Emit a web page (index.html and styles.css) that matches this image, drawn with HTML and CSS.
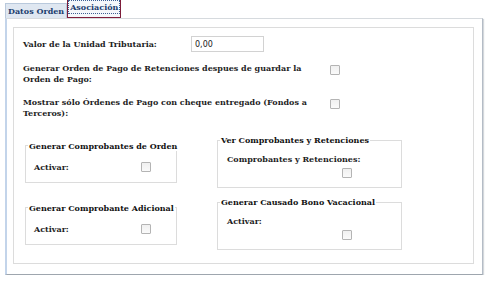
FILE: index.html
```
<!doctype html>
<html lang="es">
<head>
	<meta charset="utf-8">
	<title>Asociación</title>
	<link rel="stylesheet" href="styles.css">
</head>
<body>

	<!--pestañas-->
	<div class="tabs">
		<div class="tab">Datos Orden</div>
		<div class="tab tab_activa"><span>Asociación</span></div>
	</div>

	<div class="panel">
		<div class="caja">

			<div class="fila fila_valor">
				<label class="etq etq_valor">Valor de la Unidad Tributaria:</label>
				<input type="text" class="txt" value="0,00">
			</div>

			<div class="fila fila_check">
				<label class="etq etq_larga">Generar Orden de Pago de Retenciones despues de guardar la Orden de Pago:</label>
				<span class="chk"></span>
			</div>

			<div class="fila fila_check fila_sep">
				<label class="etq etq_larga">Mostrar sólo Órdenes de Pago con cheque entregado (Fondos a Terceros):</label>
				<span class="chk"></span>
			</div>

			<!--grupos-->
			<div class="grupos">
				<fieldset class="grupo grupo_izq">
					<legend>Generar Comprobantes de Orden</legend>
					<div class="fila_grupo">
						<label class="etq etq_activar">Activar:</label>
						<span class="chk"></span>
					</div>
				</fieldset>

				<fieldset class="grupo grupo_der">
					<legend>Ver Comprobantes y Retenciones</legend>
					<label class="etq etq_grupo">Comprobantes y Retenciones:</label>
					<span class="chk chk_abajo"></span>
				</fieldset>

				<fieldset class="grupo grupo_izq">
					<legend>Generar Comprobante Adicional</legend>
					<div class="fila_grupo">
						<label class="etq etq_activar">Activar:</label>
						<span class="chk"></span>
					</div>
				</fieldset>

				<fieldset class="grupo grupo_der">
					<legend>Generar Causado Bono Vacacional</legend>
					<label class="etq etq_grupo">Activar:</label>
					<span class="chk chk_abajo"></span>
				</fieldset>
			</div>

		</div>
	</div>

</body>
</html>
```

FILE: styles.css
```
body{
	margin: 0;
	background: #ffffff;
	font-family: "DejaVu Serif", serif;
	font-size: 8px;
	font-weight: bold;
	color: #1e1e1e;
}

.tabs{
	display: flex;
	align-items: flex-end;
	height: 18px;
	padding-left: 5px;
}

.tab{
	height: 14px;
	padding: 0 2px;
	line-height: 14px;
	background-color: #dfe7f1;
	border: 1px solid #b9c9dc;
	border-bottom: none;
	color: #1b3d6e;
}

.tab_activa{
	height: 16px;
	padding: 1px 1px 0 1px;
	line-height: 12px;
	background-color: #f4f7fb;
	border: 1px solid #7d1d3a;
}

.tab_activa span{
	display: inline-block;
	padding: 0 1px;
	outline: 1px dotted #3d5f93;
	outline-offset: 0;
}

.panel{
	width: 461px;
	height: 237px;
	margin: 0 4px 0 5px;
	padding: 8px 8px 10px 6px;
	border-top: 1px solid #d6dade;
	border-left: 2px solid #c3d4ea;
	border-right: 1px solid #b4bcc6;
	border-bottom: 1px solid #9ea6ae;
	box-shadow: 1px 1px 1px #d4d8dc;
}

.caja{
	height: 227px;
	padding: 8px 0 0 9px;
	border: 1px solid #dcdcdc;
}

.fila{
	display: flex;
	align-items: center;
}

.etq{
	display: block;
}

.etq_valor{
	width: 168px;
}

.txt{
	width: 65px;
	height: 12px;
	margin: 0;
	padding: 1px 3px;
	border: 1px solid #d2d2d2;
	font-family: "DejaVu Sans", sans-serif;
	font-weight: normal;
	font-size: 8px;
	color: #222;
}

.fila_check{
	align-items: flex-start;
	margin-top: 11px;
	line-height: 11px;
}

.fila_sep{
	margin-top: 12px;
}

.etq_larga{
	width: 307px;
}

.chk{
	display: block;
	width: 8px;
	height: 8px;
	margin-top: 2px;
	border: 1px solid #b4b4b4;
	border-radius: 1px;
	background: linear-gradient(#f0f0f0, #fafafa);
}

.grupos{
	display: grid;
	grid-template-columns: 152px 185px;
	column-gap: 40px;
	row-gap: 9px;
	align-items: center;
	margin: 16px 0 0 2px;
}

.grupo{
	margin: 0;
	padding: 0 2px;
	min-width: 0;
	border: 1px solid #dcdcdc;
	line-height: 10px;
}

.grupo legend{
	padding: 0 1px;
	white-space: nowrap;
	color: #111;
}

.grupo_izq{
	padding-top: 11px;
	padding-bottom: 10px;
}

.fila_grupo{
	display: flex;
	align-items: center;
	padding-left: 6px;
}

.etq_activar{
	width: 107px;
}

.fila_grupo .chk{
	margin-top: 0;
}

.grupo_der{
	padding-top: 9px;
	padding-bottom: 9px;
}

.etq_grupo{
	padding-left: 7px;
}

.chk_abajo{
	margin: 4px 0 0 122px;
}
```
